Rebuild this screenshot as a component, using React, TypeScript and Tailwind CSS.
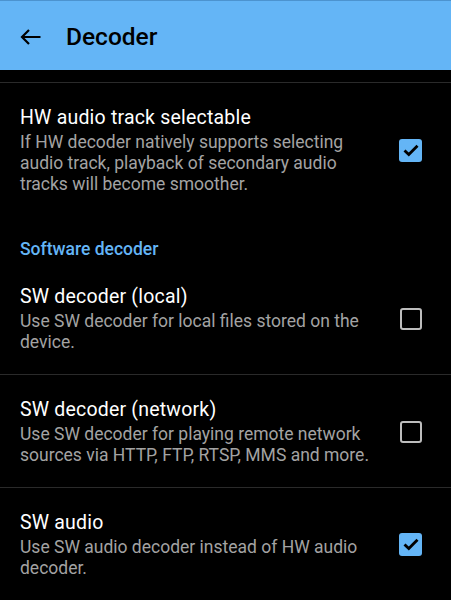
import React from "react";

type Pref = {
  title: string;
  summary: string;
  checked: boolean;
  divider?: boolean;
};

const CheckBox = ({ checked }: { checked: boolean }) => {
  if (checked) {
    return (
      <div className="w-[23px] h-[23px] rounded-[3px] bg-[#64b5f6] flex items-center justify-center">
        <svg width="16" height="13" viewBox="0 0 16 13">
          <path d="M1.5 6.5 L5.8 10.6 L14.5 1.8" fill="none" stroke="#000" strokeWidth="2.8" />
        </svg>
      </div>
    );
  }
  return <div className="w-[22px] h-[22px] rounded-[3px] border-[2.5px] border-[#bdbdbd]" />;
};

const PrefRow = ({ title, summary, checked, divider }: Pref) => (
  <div className={divider ? "border-b border-[#2a2a2a]" : ""}>
    <div className={`flex items-center pl-[20px] pr-[29px] pt-[22px] ${divider ? "pb-[21px]" : "pb-[22px]"}`}>
      <div className="flex-1 pr-[20px]">
        <div className="text-[19.5px] leading-[25px] tracking-[0.2px] text-white">{title}</div>
        <div className="mt-[2px] text-[17.5px] leading-[21px] text-[#a3a3a3]">{summary}</div>
      </div>
      <CheckBox checked={checked} />
    </div>
  </div>
);

const prefs: Pref[] = [
  {
    title: "SW decoder (local)",
    summary: "Use SW decoder for local files stored on the device.",
    checked: false,
    divider: true,
  },
  {
    title: "SW decoder (network)",
    summary: "Use SW decoder for playing remote network sources via HTTP, FTP, RTSP, MMS and more.",
    checked: false,
    divider: true,
  },
  {
    title: "SW audio",
    summary: "Use SW audio decoder instead of HW audio decoder.",
    checked: true,
    divider: true,
  },
];

export default function App() {
  return (
    <div className="w-[451px] h-[600px] overflow-hidden bg-black" style={{ fontFamily: "Roboto, 'Noto Sans', sans-serif" }}>
      <div className="h-[70px] bg-[#64b5f6] border-t border-[#4c93cf] flex items-center pl-[20px] pt-[2px]">
        <svg width="21" height="16" viewBox="0 0 21 16" className="shrink-0">
          <path d="M1.5 8 H20.5 M9 1 L2 8 L9 15" fill="none" stroke="#000" strokeWidth="2.2" />
        </svg>
        <div className="ml-[25px] mt-[2px] text-[24.5px] font-medium text-black leading-none">Decoder</div>
      </div>
      <div className="h-[12px]" />
      <div className="border-b border-[#2a2a2a]" />
      <PrefRow
        title="HW audio track selectable"
        summary="If HW decoder natively supports selecting audio track, playback of secondary audio tracks will become smoother."
        checked={true}
      />
      <div className="pl-[20px] pt-[22px] pb-[2px] text-[17.5px] leading-[21px] font-medium text-[#64b5f6]">
        Software decoder
      </div>
      {prefs.map((p) => (
        <PrefRow key={p.title} {...p} />
      ))}
    </div>
  );
}
